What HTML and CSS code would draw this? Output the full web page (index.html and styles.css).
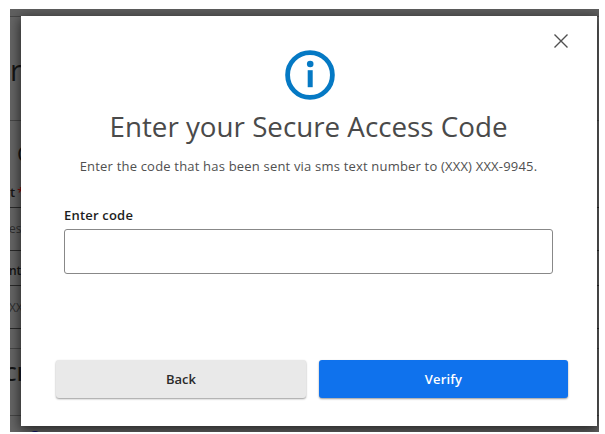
FILE: index.html
```html
<!DOCTYPE html>
<html lang="en">
<head>
    <meta charset="UTF-8">
    <meta name="viewport" content="width=device-width, initial-scale=1.0">
    <title>Secure Access Code</title>
    <link rel="stylesheet" href="styles.css">
</head>
<body>
    <div class="screen">
        <div class="page">
            <div class="row topbar"></div>
            <div class="row title">r</div>
            <div class="row section">C</div>
            <div class="row label">t<span class="required">*</span></div>
            <div class="row field">es</div>
            <div class="row label-small">nt</div>
            <div class="row field-small">XX</div>
            <div class="row spacer"></div>
            <div class="row heading">CI</div>
            <div class="radio"></div>
        </div>

        <div class="modal">
            <button class="close" aria-label="Close">
                <svg width="16" height="16" viewBox="0 0 16 16">
                    <path d="M1.5 1.5L14.5 14.5M14.5 1.5L1.5 14.5" fill="none" stroke="#505050" stroke-width="1.4"/>
                </svg>
            </button>
            <svg class="info" width="50" height="50" viewBox="0 0 50 50">
                <circle cx="25" cy="25" r="22.4" fill="none" stroke="#0579c4" stroke-width="4.8"/>
                <circle cx="25.2" cy="14" r="3.3" fill="#0579c4"/>
                <rect x="22.7" y="20.2" width="5" height="17" fill="#0579c4"/>
            </svg>
            <h1>Enter your Secure Access Code</h1>
            <p class="message">Enter the code that has been sent via sms text number to (XXX) XXX-9945.</p>
            <label for="code">Enter code</label>
            <input id="code" class="code" type="text">
            <div class="buttons">
                <button class="btn back">Back</button>
                <button class="btn verify">Verify</button>
            </div>
        </div>
    </div>
</body>
</html>
```
FILE: styles.css
```css
* {
    box-sizing: border-box;
}
body {
    margin: 0;
    padding: 9px 6px 2px 10px;
    background-color: #fff;
    font-family: "Open Sans", "Noto Sans", sans-serif;
}
.screen {
    position: relative;
    height: 423px;
    overflow: hidden;
    background-color: #666;
}

/* Dimmed page behind the dialog */
.page {
    color: #151515;
}
.row {
    border-bottom: 1px solid #474747;
    white-space: nowrap;
}
.topbar {
    height: 8px;
    background-color: #606060;
}
.title {
    height: 104px;
    font-size: 29px;
    line-height: 105px;
}
.section {
    height: 57px;
    padding-left: 7px;
    border-bottom: none;
    font-size: 22px;
    line-height: 65px;
}
.label {
    height: 30px;
    border-color: #2b2b2b;
    font-size: 13px;
    font-weight: 600;
    line-height: 29px;
}
.required {
    margin-left: 2px;
    color: #8c0c0c;
}
.field {
    height: 43px;
    border-color: #2b2b2b;
    color: #303030;
    font-size: 12px;
    line-height: 42px;
    text-indent: -1px;
}
.label-small {
    height: 35px;
    border-color: #2b2b2b;
    font-size: 12px;
    font-weight: 600;
    line-height: 39px;
    text-indent: -1px;
}
.field-small {
    height: 43px;
    border-color: #2b2b2b;
    color: #303030;
    font-size: 12px;
    line-height: 43px;
    text-indent: -1px;
}
.spacer {
    height: 20px;
}
.heading {
    height: 67px;
    font-size: 20px;
    font-weight: 600;
    line-height: 49px;
    text-indent: -6px;
}
.radio {
    width: 12px;
    height: 12px;
    margin: 15px 0 0 19px;
    border: 2px solid #10106a;
    border-radius: 50%;
}

.modal {
    position: absolute;
    top: 7px;
    left: 11px;
    display: flex;
    flex-direction: column;
    align-items: center;
    width: 575.5px;
    height: 410px;
    padding: 34px 28.5px 28px 35px;
    background-color: #fff;
    box-shadow: 0 3px 12px 1px rgba(0, 0, 0, 0.65);
}
.close {
    position: absolute;
    top: 17px;
    right: 27.5px;
    width: 16px;
    height: 16px;
    padding: 0;
    border: none;
    background: none;
    cursor: pointer;
}
.close svg {
    display: block;
}
.info {
    flex: none;
    margin-right: 4px;
}
h1 {
    margin: 7px 7px 0 0;
    color: #4a4a4a;
    font-size: 27.75px;
    font-weight: 400;
    line-height: 38px;
    white-space: nowrap;
}
.message {
    margin: 12px 7px 0 0;
    color: #505050;
    font-size: 13px;
    letter-spacing: 0.19px;
    line-height: 18px;
    white-space: nowrap;
}
label {
    align-self: flex-start;
    margin: 31px 0 0 8px;
    color: #1d1d1d;
    font-size: 13px;
    font-weight: 600;
    letter-spacing: 0.2px;
    line-height: 18px;
}
.code {
    align-self: stretch;
    height: 45px;
    margin: 5px 15px 0 8px;
    border: 1px solid #888;
    border-radius: 3px;
    background-color: #fff;
}
.buttons {
    display: flex;
    align-self: stretch;
    gap: 13px;
    margin-top: auto;
}
.btn {
    height: 38px;
    padding: 0;
    border: none;
    border-radius: 3px;
    box-shadow: 0 1px 2px rgba(0, 0, 0, 0.4);
    font-family: inherit;
    font-size: 13px;
    font-weight: 600;
    cursor: pointer;
}
.back {
    width: 250px;
    background-color: #e9e9e9;
    color: #2b2b2b;
}
.verify {
    width: 249px;
    background-color: #0f72ed;
    color: #fff;
    letter-spacing: 0.15px;
}
```
